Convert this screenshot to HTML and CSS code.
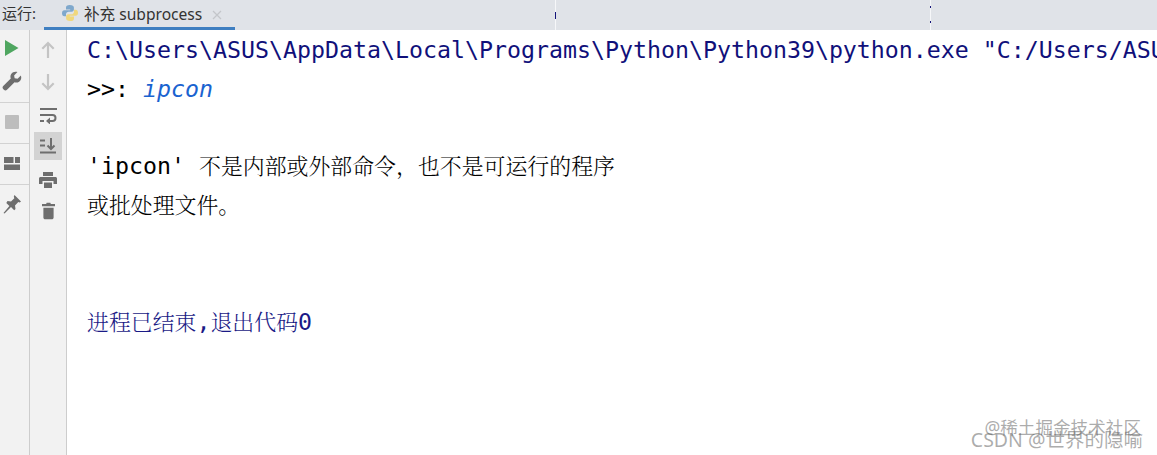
FILE: index.html
```html
<!DOCTYPE html>
<html lang="zh">
<head>
<meta charset="utf-8">
<title>运行</title>
<link rel="stylesheet" href="styles.css">
</head>
<body>
<div class="app">
  <header class="tabbar">
    <span class="run-label">运行:</span>
    <div class="tab">
      <svg class="py" width="18" height="18" viewBox="0 0 18 18"><path fill="#7fa8cc" d="M8.800 1C6 1 5 2 5 3.600V5.500h4.200v.8H3.400C1.800 6.300 1 7.600 1 9.300c0 1.800.9 3 2.300 3H5v-2c0-1.500 1.200-2.600 2.700-2.600h3.100c1.200 0 2.100-1 2.100-2.100V3.400C12.900 1.900 11.500 1 8.800 1z"/><path fill="#f0d77c" d="M9.200 17c2.800 0 3.800-1 3.800-2.600v-1.900H8.800v-.8h5.800c1.600 0 2.400-1.300 2.400-3 0-1.800-.9-3-2.300-3H13v2c0 1.500-1.200 2.600-2.700 2.600H7.200c-1.200 0-2.100 1-2.100 2.100v2.200c0 1.500 1.400 2.400 4.100 2.400z"/></svg>
      <span class="tab-title">补充 subprocess</span>
      <svg class="close" width="10" height="10" viewBox="0 0 10 10"><path d="M1 1l8 8M9 1l-8 8" stroke="#c3c6ca" stroke-width="1.300"/></svg>
    </div>
    <div class="seams">
      <i class="seam seam-a"></i>
      <i class="seam seam-b"></i>
    </div>
  </header>
  <div class="body">
    <nav class="bar bar-main">
      <button class="tool"><svg width="14" height="16" viewBox="0 0 14 16"><path fill="#4fa660" d="M0 0l13.500 8L0 16z"/></svg></button>
      <button class="tool"><svg width="20" height="20" viewBox="0 0 18 18"><path fill="#6e6e6e" d="M17 4l-3 3-2.600-.5L10.900 4 13.900 1c-2.100-.7-4.400-.1-5.600 1.700-.8 1.200-.9 2.700-.4 4L1.100 13.500c-.8.800-.8 2 0 2.800l.6.600c.8.800 2 .8 2.800 0l6.800-6.800c1.300.5 2.900.3 4.100-.5 1.800-1.200 2.400-3.600 1.600-5.600z"/></svg></button>
      <hr class="rule">
      <button class="tool"><svg width="14" height="14" viewBox="0 0 14 14"><rect width="14" height="14" fill="#bdbdbd" rx="1"/></svg></button>
      <hr class="rule">
      <button class="tool"><svg width="16" height="13" viewBox="0 0 16 13"><path fill="#6e6e6e" d="M0 0h9.500v6H0zM11 0h5v6h-5zM0 7.500h16V13H0z"/></svg></button>
      <hr class="rule">
      <button class="tool"><svg width="18" height="19" viewBox="0 0 18 19"><path fill="#6e6e6e" d="M11.500 0L18 6.500l-1.300 1-1.400-.4-3.300 3.300.5 3.500-1.300 1.300-3.200-3.200-6.500 6.500-1-.4 5.900-7.100-3.100-3.100L4.500 6.100l3.500.5 3.300-3.300-.5-1.700z"/></svg></button>
    </nav>
    <nav class="bar bar-side">
      <button class="tool"><svg width="14" height="17" viewBox="0 0 14 17"><path fill="none" stroke="#c4c4c4" stroke-width="2.200" d="M7 17V2M1.300 7.700L7 2l5.700 5.700"/></svg></button>
      <button class="tool"><svg width="14" height="17" viewBox="0 0 14 17"><path fill="none" stroke="#c4c4c4" stroke-width="2.200" d="M7 0v15M1.300 9.300L7 15l5.700-5.700"/></svg></button>
      <button class="tool"><svg width="17" height="17" viewBox="0 0 17 17"><path fill="none" stroke="#6e6e6e" stroke-width="2" d="M0 2h17M0 8h12.500c4 0 4 6 0 6H8M0 14h4"/><path fill="#6e6e6e" d="M10 10.500v7L6 14z"/></svg></button>
      <button class="tool tool-on"><svg width="16" height="16" viewBox="0 0 16 16"><path fill="none" stroke="#6e6e6e" stroke-width="2" d="M0 2.500h5M0 7.500h5M0 14.500h16M11 0v10.500M7.500 7.500L11 11l3.500-3.500"/></svg></button>
      <button class="tool tool-print"><svg width="18" height="16" viewBox="0 0 18 16"><path fill="#6e6e6e" d="M4 0h10v4H4zM1.500 5h15c.8 0 1.500.7 1.500 1.500V12h-3.500V9h-11v3H0V6.500C0 5.700.7 5 1.500 5zM5 10.500h8V16H5z"/></svg></button>
      <button class="tool tool-trash"><svg width="13" height="18" viewBox="0 0 14 18"><path fill="#6e6e6e" d="M5 0h4l.5 1.500H14V4H0V1.500h4.500zM1.500 5.500h11V16c0 1-.8 2-2 2h-7c-1.200 0-2-1-2-2z"/></svg></button>
    </nav>
    <main class="console">
      <div class="line path">C:\Users\ASUS\AppData\Local\Programs\Python\Python39\python.exe "C:/Users/ASUS/</div>
      <div class="line">&gt;&gt;: <em class="input">ipcon</em></div>
      <div class="line"></div>
      <div class="line">'ipcon' <span class="cjk">不是内部或外部命令，也不是可运行的程序</span></div>
      <div class="line"><span class="cjk">或批处理文件。</span></div>
      <div class="line"></div>
      <div class="line"></div>
      <div class="line exit"><span class="cjk">进程已结束</span>,<span class="cjk">退出代码</span>0</div>
    </main>
  </div>
  <div class="mark mark-a">@稀土掘金技术社区</div>
  <div class="mark mark-b">CSDN @世界的隐喻</div>
</div>
</body>
</html>
```
FILE: styles.css
```css
* { box-sizing: border-box; }
html, body { margin: 0; height: 100%; overflow: hidden; background: #fff; }
.app { position: relative; display: flex; flex-direction: column; width: 1157px; height: 455px; overflow: hidden; }

.tabbar { display: flex; height: 30px; flex: none; background: #e0e3e8; font-family: "Noto Sans", "Noto Sans CJK SC", sans-serif; font-size: 15px; color: #333; }
.run-label { width: 44px; padding: 3px 0 0 2px; line-height: 20px; }
.tab { display: flex; align-items: flex-start; width: 191px; height: 30px; padding: 4px 0 0 17px; border-bottom: 3px solid #3f7fc1; }
.py { flex: none; }
.tab-title { margin-left: 5px; line-height: 20px; white-space: nowrap; font-size: 15.600px; }
.close { margin: 6px 0 0 10px; flex: none; }
.seams { display: flex; flex: 1; position: relative; }
.seam { position: absolute; top: 0; width: 1px; height: 30px; background: #f6f7f9; }
.seam-a { left: 320px; }
.seam-b { left: 695px; }
.seam::before, .seam::after { content: ""; position: absolute; left: 0; width: 1px; background: #14147a; }
.seam-a::before { top: 12px; height: 7px; }
.seam-b::before { top: 6px; height: 2px; }
.seam-b::after { top: 21px; height: 2px; }

.body { display: flex; flex: 1; min-height: 0; }
.bar { display: flex; flex-direction: column; align-items: center; flex: none; height: 100%; background: #f2f2f2; border-right: 1px solid #cdcdcd; }
.bar-main { width: 30px; padding: 6px 5px 0 0; }
.bar-side { width: 37px; padding-top: 3px; }
.tool { display: flex; align-items: center; justify-content: center; padding: 0; border: 0; background: none; flex: none; }
.bar-main .tool { width: 24px; height: 24px; }
.bar-main .tool + .tool { margin-top: 9px; }
.rule { align-self: stretch; height: 1px; margin: 9px -5px 0 0; border: 0; background: #d2d2d2; }
.bar-main .rule + .tool { margin-top: 7px; }
.bar-side .tool { width: 28px; height: 33px; }
.bar-side .tool-on { height: 28px; background: #d3d3d3; }
.bar-side .tool-print { height: 40px; }
.bar-side .tool-trash { height: 22px; }

.console { flex: 1; min-width: 0; padding: 1px 0 0 20px; font-family: "DejaVu Sans Mono", "Noto Sans CJK SC", monospace; font-size: 23.250px; color: #000; overflow: hidden; }
.line { height: 38.800px; line-height: 38.800px; white-space: nowrap; }
.path { color: #10107a; }
.input { color: #1a63d0; font-style: italic; }
.cjk { font-family: "Noto Serif CJK SC", "Noto Sans CJK SC", sans-serif; font-size: 21.900px; font-weight: 300; line-height: 1; }
.exit { color: #1a1a86; }

.mark { position: absolute; white-space: nowrap; font-family: "Noto Sans", "Noto Sans CJK SC", sans-serif; color: rgba(90, 90, 90, .5); }
.mark-a { right: 16px; top: 414px; font-size: 17.600px; }
.mark-b { right: 14px; top: 424px; font-size: 19.500px; }
```
